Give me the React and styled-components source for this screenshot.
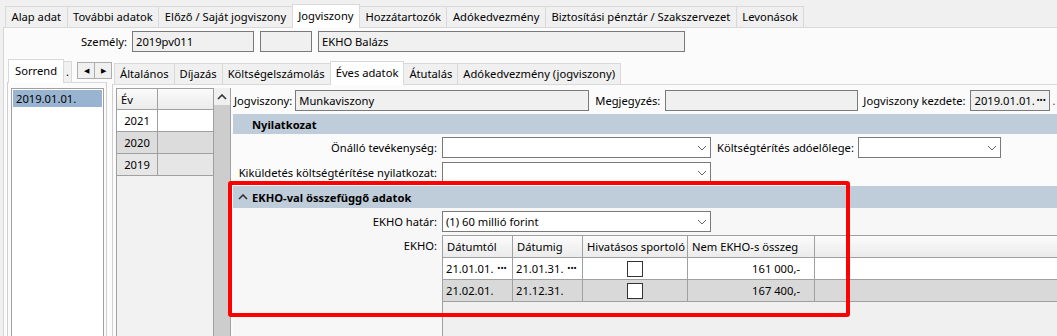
import React from 'react';
import styled, { createGlobalStyle } from 'styled-components';

const GlobalStyle = createGlobalStyle`
  body {
    margin: 0;
    background: #f0f0f0;
    font-family: 'Noto Sans', 'Open Sans', sans-serif;
    font-size: 11.2px;
    color: #000;
  }
`;

const Screen = styled.div`
  position: relative;
  width: 1057px;
  height: 336px;
  overflow: hidden;
  display: flex;
  flex-direction: column;
  background: #f0f0f0;
`;

const TabBar = styled.div`
  display: flex;
  align-items: flex-end;
  height: ${p => p.$height}px;
  padding-left: ${p => p.$left}px;
  flex-shrink: 0;
`;

const Tab = styled.div`
  height: ${p => (p.$active ? 23 : 20)}px;
  line-height: ${p => (p.$active ? 21 : 20)}px;
  padding: 0 ${p => p.$pad ?? 5.5}px;
  border: 1px solid #d9d9d9;
  border-bottom: none;
  margin-right: -1px;
  background: ${p => (p.$active ? '#ffffff' : '#f0f0f0')};
  position: relative;
  z-index: ${p => (p.$active ? 1 : 0)};
  margin-bottom: ${p => (p.$active ? -1 : 0)}px;
  white-space: nowrap;
`;

const ArrowPair = styled.div`
  display: flex;
  margin: 0 0 3px 6px;
`;

const ArrowBtn = styled.div`
  width: 16px;
  height: 15px;
  border: 1px solid #adadad;
  margin-right: -1px;
  background: #f0f0f0;
  display: flex;
  align-items: center;
  justify-content: center;
  font-size: 7px;
`;

const Main = styled.div`
  flex: 1;
  margin-left: 3px;
  background: #fbfbfb;
  border-top: 1px solid #d9d9d9;
  border-left: 1px solid #d5d5d5;
  display: flex;
  flex-direction: column;
  min-height: 0;
`;

const Row = styled.div`
  display: flex;
  align-items: center;
  height: ${p => p.$height}px;
  padding-top: ${p => p.$top ?? 0}px;
  padding-left: ${p => p.$left ?? 0}px;
  flex-shrink: 0;
`;

const Label = styled.div`
  width: ${p => (p.$width ? `${p.$width}px` : 'auto')};
  text-align: right;
  white-space: nowrap;
  margin-left: ${p => p.$ml ?? 0}px;
  margin-right: ${p => p.$mr ?? 5}px;
  flex-shrink: 0;
  color: ${p => p.$color ?? 'inherit'};
`;

const TopLabel = styled(Label)`
  align-self: flex-start;
  margin-top: 3px;
`;

const Field = styled.div`
  width: ${p => p.$width}px;
  height: 19px;
  line-height: 19px;
  border: 1px solid #7a7a7a;
  background: ${p => (p.$white ? '#ffffff' : '#f0f0f0')};
  padding: 0 3px;
  box-sizing: content-box;
  margin-right: ${p => p.$mr ?? 0}px;
  display: flex;
  justify-content: space-between;
  align-items: center;
  white-space: nowrap;
  overflow: hidden;
  flex-shrink: 0;
`;

const Dots = styled.span`
  font-size: 7px;
  font-weight: 700;
  letter-spacing: 0.5px;
  flex-shrink: 0;
  margin-left: 2px;
  padding-right: ${p => p.$right ?? 2}px;
`;

const Body = styled.div`
  flex: 1;
  display: flex;
  min-height: 0;
`;

const LeftCol = styled.div`
  width: 103px;
  display: flex;
  flex-direction: column;
  flex-shrink: 0;
`;

const LeftPane = styled.div`
  flex: 1;
  margin-left: 3px;
  border-left: 1px solid #cfcfcf;
  border-right: 1px solid #cfcfcf;
  border-top: 1px solid #d9d9d9;
  background: #fbfbfb;
  padding: 5px 2px 0 3px;
  display: flex;
`;

const ListBox = styled.div`
  flex: 1;
  background: #fff;
  border: 1px solid #a0a0a0;
  border-bottom: none;
  padding: 1px;
`;

const ListItem = styled.div`
  height: 17px;
  line-height: 17px;
  padding: 0 3px;
  background: ${p => (p.$selected ? '#99b4d1' : 'transparent')};
`;

const RightCol = styled.div`
  flex: 1;
  margin-left: 5px;
  display: flex;
  flex-direction: column;
  min-width: 0;
`;

const RightPane = styled.div`
  flex: 1;
  display: flex;
  border-top: 1px solid #d9d9d9;
  border-left: 1px solid #cfcfcf;
  background: #fbfbfb;
  padding: 3px 0 0 3px;
  min-height: 0;
`;

const YearGrid = styled.div`
  width: 96px;
  border: 1px solid #a0a0a0;
  border-bottom: none;
  background: #f2f2f2;
  flex-shrink: 0;
`;

const GridRow = styled.div`
  display: flex;
  height: ${p => p.$height ?? 22}px;
  background: ${p => p.$bg ?? 'transparent'};
  border-bottom: 1px solid #a0a0a0;
  box-sizing: border-box;
`;

const GridCell = styled.div`
  width: ${p => (p.$width ? `${p.$width}px` : 'auto')};
  flex: ${p => (p.$width ? '0 0 auto' : '1')};
  border-right: ${p => (p.$last ? 'none' : '1px solid #a0a0a0')};
  padding: 0 ${p => p.$pad ?? 4}px;
  display: flex;
  align-items: center;
  justify-content: ${p => p.$justify ?? 'flex-start'};
  white-space: nowrap;
  box-sizing: border-box;
`;

const HeaderRow = styled(GridRow)`
  background: linear-gradient(#fbfbfb, #ebebeb);
`;

const ScrollBar = styled.div`
  width: 16px;
  background: #cdcdcd;
  flex-shrink: 0;
`;

const ScrollBtn = styled.div`
  height: 17px;
  background: #f0f0f0;
  display: flex;
  align-items: center;
  justify-content: center;
`;

const Form = styled.div`
  flex: 1;
  border-left: 1px solid #a0a0a0;
  display: flex;
  flex-direction: column;
  min-width: 0;
`;

const SectionBar = styled.div`
  margin: ${p => p.$mt ?? 0}px 0 0 2px;
  height: ${p => p.$height}px;
  background: #bfccd9;
  display: flex;
  align-items: center;
  padding-left: ${p => p.$pad}px;
  font-weight: 700;
  gap: 4px;
  flex-shrink: 0;
`;

const EkhoBody = styled.div`
  flex: 1;
  margin-left: 2px;
  background: #f7f7f7;
  display: flex;
  flex-direction: column;
`;

const EkhoGridRow = styled.div`
  display: flex;
  flex: 1;
  padding-top: 3px;
`;

const EkhoGrid = styled.div`
  flex: 1;
  border-left: 1px solid #a0a0a0;
  border-top: 1px solid #a0a0a0;
  background: #f0f0f0;
`;

const Check = styled.div`
  width: 16px;
  height: 16px;
  border: 1px solid #333;
  background: #fff;
  box-sizing: border-box;
`;

const Highlight = styled.div`
  position: absolute;
  left: 228px;
  top: 181px;
  width: 622px;
  height: 136px;
  border: 4px solid #ff0000;
  border-radius: 3px;
  box-sizing: border-box;
  pointer-events: none;
`;

const Chevron = ({ up }) => (
  <svg width="10" height="6" viewBox="0 0 10 6">
    <polyline
      points={up ? '1,5 5,1 9,5' : '1,1 5,5 9,1'}
      fill="none"
      stroke={up ? '#333' : '#666'}
      strokeWidth={up ? 1.6 : 1}
    />
  </svg>
);

const Select = ({ width, children, mr }) => (
  <Field $width={width} $white $mr={mr}>
    <span>{children}</span>
    <Chevron />
  </Field>
);

const topTabs = [
  'Alap adat',
  'További adatok',
  'Előző / Saját jogviszony',
  'Jogviszony',
  'Hozzátartozók',
  'Adókedvezmény',
  'Biztosítási pénztár / Szakszervezet',
  'Levonások',
];

const innerTabs = ['Általános', 'Díjazás', 'Költségelszámolás', 'Éves adatok', 'Átutalás', 'Adókedvezmény (jogviszony)'];

const years = [
  { year: '2021', bg: '#ffffff' },
  { year: '2020', bg: '#dcdcdc' },
  { year: '2019', bg: '#e6e6e6' },
];

const ekhoRows = [
  { from: '21.01.01.', to: '21.01.31.', amount: '161 000,-', bg: '#ffffff', dots: true },
  { from: '21.02.01.', to: '21.12.31.', amount: '167 400,-', bg: '#d9d9d9', dots: false },
];

const App = () => (
  <Screen>
    <GlobalStyle />
    <TabBar $height={27} $left={5}>
      {topTabs.map(t => (
        <Tab key={t} $active={t === 'Jogviszony'}>{t}</Tab>
      ))}
    </TabBar>

    <Main>
      <Row $height={27}>
        <Label $width={123}>Személy:</Label>
        <Field $width={114} $mr={6}>2019pv011</Field>
        <Field $width={44} $mr={6} />
        <Field $width={359}>EKHO Balázs</Field>
      </Row>

      <Body>
        <LeftCol>
          <TabBar $height={27} $left={4}>
            <Tab $active $pad={6}>Sorrend</Tab>
            <Tab $pad={2}>.</Tab>
            <ArrowPair>
              <ArrowBtn>◀</ArrowBtn>
              <ArrowBtn>▶</ArrowBtn>
            </ArrowPair>
          </TabBar>
          <LeftPane>
            <ListBox>
              <ListItem $selected>2019.01.01.</ListItem>
            </ListBox>
          </LeftPane>
        </LeftCol>

        <RightCol>
          <TabBar $height={29} $left={2}>
            {innerTabs.map(t => (
              <Tab key={t} $pad={5} $active={t === 'Éves adatok'}>{t}</Tab>
            ))}
          </TabBar>
          <RightPane>
            <YearGrid>
              <HeaderRow $height={21}>
                <GridCell $width={41}>Év</GridCell>
                <GridCell $last />
              </HeaderRow>
              {years.map(y => (
                <GridRow key={y.year} $bg={y.bg}>
                  <GridCell $width={41} $justify="center">{y.year}</GridCell>
                  <GridCell $last />
                </GridRow>
              ))}
            </YearGrid>
            <ScrollBar>
              <ScrollBtn><Chevron up /></ScrollBtn>
            </ScrollBar>

            <Form>
              <Row $height={24} $left={3}>
                <Label $mr={3}>Jogviszony:</Label>
                <Field $width={286}>Munkaviszony</Field>
                <Label $ml={6} $mr={5}>Megjegyzés:</Label>
                <Field $width={185}>&nbsp;</Field>
                <Label $ml={5} $mr={5}>Jogviszony kezdete:</Label>
                <Field $width={72}>
                  <span>2019.01.01.</span>
                  <Dots $right={1}>•••</Dots>
                </Field>
                <Label $ml={2} $mr={0} $color="#c00">.</Label>
              </Row>

              <SectionBar $mt={2} $height={20} $pad={19}>Nyilatkozat</SectionBar>

              <Row $height={21} $top={3}>
                <Label $width={206}>Önálló tevékenység:</Label>
                <Select width={261} mr={6}></Select>
                <Label $mr={4}>Költségtérítés adóelőlege:</Label>
                <Select width={135}></Select>
              </Row>
              <Row $height={21} $top={4}>
                <Label $width={206}>Kiküldetés költségtérítése nyilatkozat:</Label>
                <Select width={261}></Select>
              </Row>

              <SectionBar $mt={3} $height={22} $pad={5}>
                <Chevron up />
                <span>EKHO-val összefüggő adatok</span>
              </SectionBar>

              <EkhoBody>
                <Row $height={21} $top={3}>
                  <Label $width={204}>EKHO határ:</Label>
                  <Select width={261}>(1) 60 millió forint</Select>
                </Row>
                <EkhoGridRow>
                  <TopLabel $width={204}>EKHO:</TopLabel>
                  <EkhoGrid>
                    <HeaderRow $height={22}>
                      <GridCell $width={70}>Dátumtól</GridCell>
                      <GridCell $width={70}>Dátumig</GridCell>
                      <GridCell $width={105}>Hivatásos sportoló</GridCell>
                      <GridCell $width={127}>Nem EKHO-s összeg</GridCell>
                      <GridCell $last />
                    </HeaderRow>
                    {ekhoRows.map(r => (
                      <GridRow key={r.from} $bg={r.bg}>
                        <GridCell $width={70} $pad={3} $justify="space-between">
                          <span>{r.from}</span>
                          {r.dots && <Dots>•••</Dots>}
                        </GridCell>
                        <GridCell $width={70} $pad={3} $justify="space-between">
                          <span>{r.to}</span>
                          {r.dots && <Dots>•••</Dots>}
                        </GridCell>
                        <GridCell $width={105} $justify="center"><Check /></GridCell>
                        <GridCell $width={127} $justify="flex-end" $pad={14}>{r.amount}</GridCell>
                        <GridCell $last />
                      </GridRow>
                    ))}
                  </EkhoGrid>
                </EkhoGridRow>
              </EkhoBody>
            </Form>
          </RightPane>
        </RightCol>
      </Body>
    </Main>
    <Highlight />
  </Screen>
);

export default App;
